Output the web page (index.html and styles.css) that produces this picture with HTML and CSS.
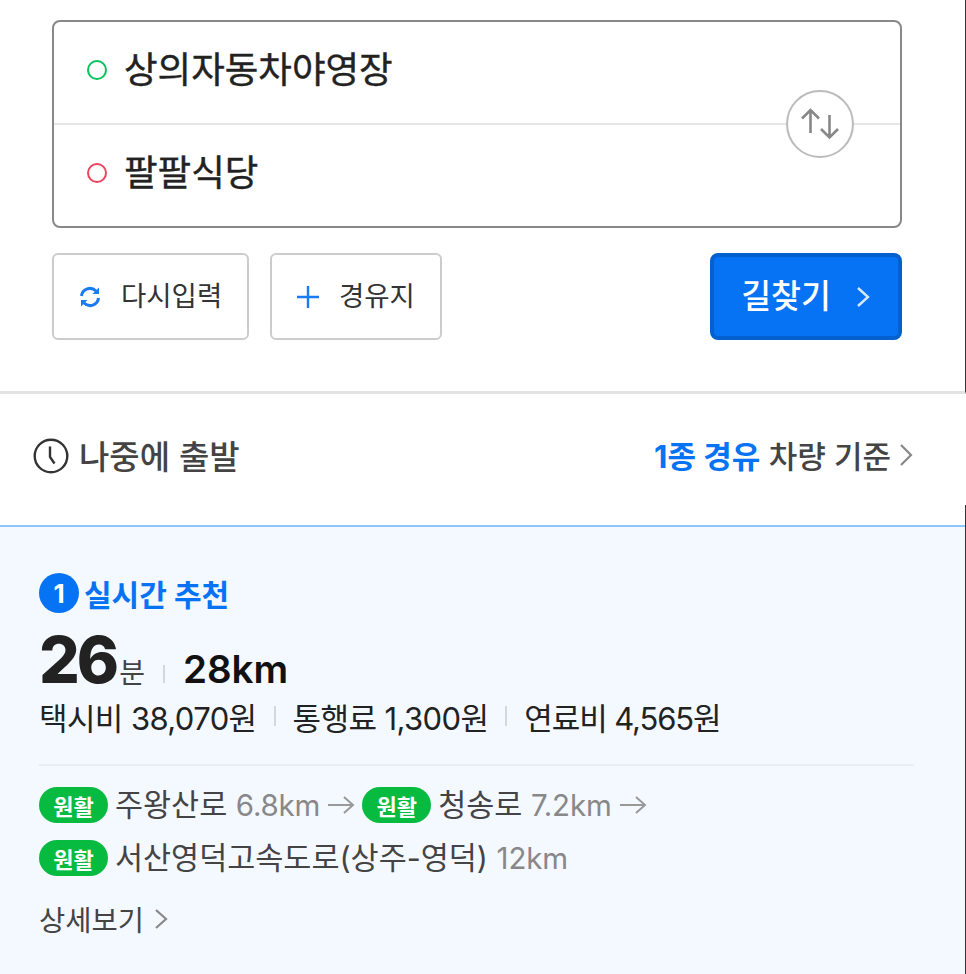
FILE: index.html
```html
<!DOCTYPE html>
<html lang="ko">
<head>
    <meta charset="UTF-8">
    <meta name="viewport" content="width=device-width, initial-scale=1.0">
    <title>길찾기</title>
    <link rel="stylesheet" href="styles.css">
</head>
<body>
    <section class="search">
        <div class="route-box">
            <div class="route-row">
                <span class="dot dot-start"></span>
                <span class="place">상의자동차야영장</span>
            </div>
            <div class="route-row">
                <span class="dot dot-end"></span>
                <span class="place">팔팔식당</span>
            </div>
            <button class="swap" type="button" aria-label="출발지 도착지 바꾸기">
                <svg width="40" height="32" viewBox="0 0 40 32" fill="none" stroke="#888" stroke-width="2.600">
                    <path d="M10.500 25V2M2 10.500L10.500 2L19 10.500"/>
                    <path d="M29.500 7V29.500M21 21L29.500 29.500L38 21"/>
                </svg>
            </button>
        </div>
        <div class="actions">
            <button class="btn btn-reset" type="button">
                <svg class="btn-icon" width="24" height="24" viewBox="0 0 24 24" fill="none" stroke="#1a7cf5" stroke-width="3">
                    <path d="M3.500 11a8.500 8.500 0 0 1 14.500-5"/>
                    <path d="M20.500 13a8.500 8.500 0 0 1-14.500 5"/>
                    <path d="M21 2.500v6.500h-6.500z" fill="#1a7cf5" stroke="none"/>
                    <path d="M3 21.500v-6.500h6.500z" fill="#1a7cf5" stroke="none"/>
                </svg>
                다시입력
            </button>
            <button class="btn btn-via" type="button">
                <svg class="btn-icon" width="24" height="24" viewBox="0 0 24 24" fill="none" stroke="#1a7cf5" stroke-width="2.400">
                    <path d="M12 1V23M1 12H23"/>
                </svg>
                경유지
            </button>
            <button class="btn-search" type="button">
                길찾기
                <svg width="16" height="24" viewBox="0 0 16 24" fill="none" stroke="#d7e8ff" stroke-width="2.400">
                    <path d="M3 3L13 12L3 21"/>
                </svg>
            </button>
        </div>
    </section>

    <section class="options">
        <div class="later">
            <svg width="36" height="36" viewBox="0 0 36 36" fill="none" stroke="#333" stroke-width="2.400">
                <circle cx="18" cy="18" r="16.300"/>
                <path d="M17 8.500V19L21.500 25.500"/>
            </svg>
            나중에 출발
        </div>
        <div class="fuel">
            <span><span class="fuel-type">1종 경유</span> 차량 기준</span>
            <svg width="14" height="24" viewBox="0 0 14 24" fill="none" stroke="#888" stroke-width="2.200">
                <path d="M2 2L12 12L2 22"/>
            </svg>
        </div>
    </section>

    <section class="result">
        <div class="rank">
            <span class="rank-no">1</span>
            실시간 추천
        </div>
        <div class="summary">
            <span class="minutes">26</span><span class="unit">분</span>
            <span class="bar bar-big"></span>
            <span class="distance">28km</span>
        </div>
        <div class="costs">
            <span>택시비 38,070원</span>
            <span class="bar"></span>
            <span>통행료 1,300원</span>
            <span class="bar"></span>
            <span class="cost-fuel">연료비 4,565원</span>
        </div>
        <div class="roads">
            <div class="road-line">
                <span class="badge">원활</span>
                <span class="road">주왕산로 <em>6.8km</em></span>
                <svg class="arrow" width="28" height="20" viewBox="0 0 28 20" fill="none" stroke="#999" stroke-width="2">
                    <path d="M1 10H26M17 2L26 10L17 18"/>
                </svg>
                <span class="badge">원활</span>
                <span class="road">청송로 <em>7.2km</em></span>
                <svg class="arrow" width="28" height="20" viewBox="0 0 28 20" fill="none" stroke="#999" stroke-width="2">
                    <path d="M1 10H26M17 2L26 10L17 18"/>
                </svg>
            </div>
            <div class="road-line">
                <span class="badge">원활</span>
                <span class="road">서산영덕고속도로(상주-영덕) <em>12km</em></span>
            </div>
        </div>
        <div class="detail">
            상세보기
            <svg width="14" height="24" viewBox="0 0 14 24" fill="none" stroke="#888" stroke-width="2.200">
                <path d="M2 3L12 12L2 21"/>
            </svg>
        </div>
    </section>
</body>
</html>
```

FILE: styles.css
```css
* {
    box-sizing: border-box;
}
body {
    margin: 0;
    height: 974px;
    overflow: hidden;
    display: flex;
    flex-direction: column;
    background-color: #fff;
    color: #222;
    font-family: "Inter", "Noto Sans CJK KR", sans-serif;
}
button {
    font-family: inherit;
    cursor: pointer;
}

/* search form */
.search {
    padding: 20px 63px 0 52px;
    height: 394px;
    flex: none;
    border-bottom: 3px solid #e3e3e3;
    border-right: 1px solid #333;
}
.route-box {
    position: relative;
    height: 208px;
    border: 2px solid #888;
    border-radius: 8px;
}
.route-row {
    height: 101px;
    display: flex;
    align-items: center;
    gap: 17px;
    padding-left: 33px;
    padding-bottom: 6px;
}
.route-row + .route-row {
    height: 103px;
    border-top: 2px solid #e6e6e6;
}
.dot {
    width: 20px;
    height: 20px;
    border-radius: 50%;
    border: 2.5px solid;
}
.dot-start {
    border-color: #06c25e;
}
.dot-end {
    border-color: #f0435f;
}
.place {
    font-size: 36.5px;
    line-height: 48px;
    color: #222;
    -webkit-text-stroke: 0.4px #222;
}
.swap {
    position: absolute;
    top: 68px;
    right: 46px;
    width: 68px;
    height: 68px;
    padding: 0;
    display: flex;
    align-items: center;
    justify-content: center;
    background-color: #fff;
    border: 2.5px solid #bbb;
    border-radius: 50%;
}
.actions {
    display: flex;
    gap: 21px;
    margin-top: 25px;
}
.btn {
    height: 87px;
    display: flex;
    align-items: center;
    background-color: #fff;
    border: 2px solid #ccc;
    border-radius: 6px;
    color: #333;
    font-size: 27.5px;
    padding: 0 0 6px 24px;
}
.btn-icon {
    margin-top: 6px;
}
.btn-reset {
    width: 197px;
    gap: 19px;
}
.btn-via {
    width: 172px;
    gap: 19px;
}
.btn-search {
    width: 192px;
    height: 87px;
    margin-left: auto;
    display: flex;
    align-items: center;
    justify-content: center;
    gap: 24px;
    background-color: #0673f5;
    border: 4px solid #0560cf;
    border-radius: 8px;
    color: #fff;
    font-size: 32.5px;
    font-weight: 500;
    padding: 0 0 6px;
}
.btn-search svg {
    margin-top: 6px;
}

/* departure and fuel row */
.options {
    position: relative;
    height: 133px;
    flex: none;
    display: flex;
    align-items: center;
    justify-content: space-between;
    padding: 0 53px 10px 33px;
    border-bottom: 2px solid #90c4fb;
    font-weight: 500;
    color: #444;
}
.options::after {
    content: "";
    position: absolute;
    right: 0;
    bottom: -2px;
    width: 1px;
    height: 22px;
    background-color: #333;
}
.later, .fuel {
    display: flex;
    align-items: center;
}
.later {
    gap: 10px;
    font-size: 33px;
}
.later svg {
    margin-top: 2px;
}
.fuel {
    gap: 8px;
    font-size: 31px;
}
.fuel-type {
    color: #0673f5;
    font-weight: 700;
}

/* route result */
.result {
    flex: 1;
    padding: 45px 51px 0 39px;
    background-color: #f4f8ff;
    border-right: 1px solid #333;
}
.rank {
    display: flex;
    align-items: center;
    gap: 5px;
    height: 42px;
    font-size: 30px;
    font-weight: 700;
    color: #0673f5;
}
.rank-no {
    width: 40px;
    height: 40px;
    display: flex;
    align-items: center;
    justify-content: center;
    border-radius: 50%;
    background-color: #0673f5;
    color: #fff;
    font-size: 26px;
    font-weight: 700;
}
.summary {
    display: flex;
    align-items: baseline;
    height: 70px;
    margin-top: 7px;
}
.minutes {
    font-size: 64px;
    font-weight: 800;
    letter-spacing: -3px;
    color: #222;
}
.unit {
    font-size: 28px;
    color: #444;
    margin-left: 3px;
}
.distance {
    font-size: 38.5px;
    font-weight: 600;
    color: #111;
}
.bar {
    display: inline-block;
    width: 2px;
    height: 20px;
    background-color: #d4d8de;
}
.bar-big {
    height: 18px;
    margin: 0 18px 2px;
}
.costs {
    display: flex;
    align-items: center;
    gap: 17px;
    height: 40px;
    margin-top: 5px;
    font-size: 31px;
    letter-spacing: -0.6px;
    color: #222;
}
.cost-fuel {
    letter-spacing: -1.1px;
}
.roads {
    margin-top: 28px;
    padding-top: 12px;
    border-top: 2px solid #e9edf3;
}
.road-line {
    display: flex;
    align-items: center;
    height: 53px;
    gap: 7px;
    font-size: 30.5px;
    color: #444;
}
.road {
    margin-top: -4px;
}
.road em {
    font-style: normal;
    font-size: 29.5px;
    letter-spacing: -0.2px;
    color: #888;
}
.badge {
    width: 69px;
    height: 36px;
    display: flex;
    align-items: center;
    justify-content: center;
    border-radius: 18px;
    background-color: #06bb40;
    color: #fff;
    font-size: 22px;
    font-weight: 700;
}
.detail {
    display: flex;
    align-items: center;
    gap: 10px;
    margin-top: 14px;
    font-size: 28.5px;
    color: #444;
}
```
